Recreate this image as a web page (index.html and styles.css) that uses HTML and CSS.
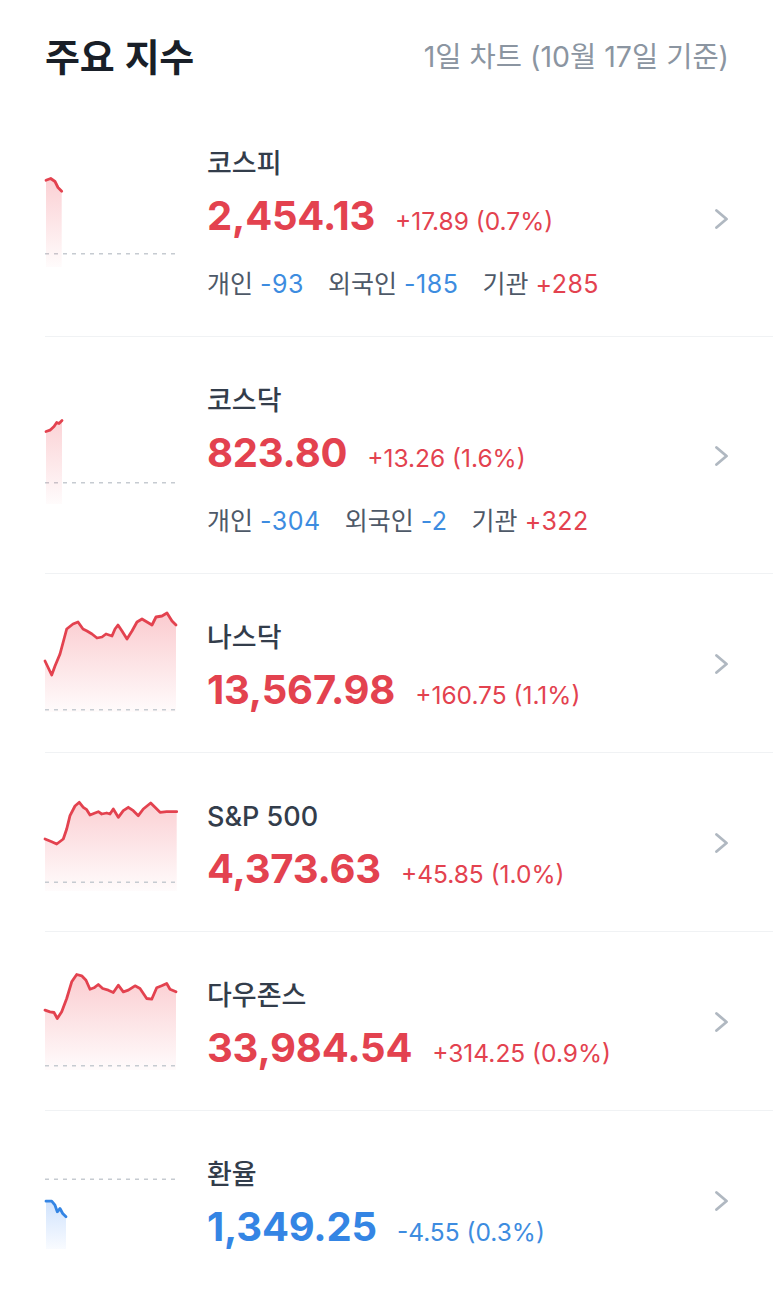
FILE: index.html
```html
<!DOCTYPE html>
<html lang="ko">
<head>
<meta charset="utf-8">
<title>주요 지수</title>
<link rel="stylesheet" href="styles.css">
</head>
<body>
<div class="page">
  <header class="header">
    <h1 class="title">주요 지수</h1>
    <div class="subtitle">1일 차트 (10월 17일 기준)</div>
  </header>

  <ul class="list">
    <li class="row">
      <svg class="chart" width="132" height="100" viewBox="0 0 132 100">
        <defs>
          <linearGradient id="gr" x1="0" y1="0" x2="0" y2="100" gradientUnits="userSpaceOnUse">
            <stop offset="0" stop-color="#f04452" stop-opacity="0.28"/>
            <stop offset="1" stop-color="#f04452" stop-opacity="0.02"/>
          </linearGradient>
          <linearGradient id="gb" x1="0" y1="0" x2="0" y2="100" gradientUnits="userSpaceOnUse">
            <stop offset="0.4" stop-color="#3182f6" stop-opacity="0.28"/>
            <stop offset="1" stop-color="#3182f6" stop-opacity="0.03"/>
          </linearGradient>
        </defs>
        <line class="base" x1="0" y1="86.8" x2="130" y2="86.8"/>
        <polygon fill="url(#gr)" points="1,13.2 5.7,11.5 10,14.5 13,20.5 16.7,24.2 16.7,100 1,100"/>
        <polyline class="line-red" points="1,13.2 5.7,11.5 10,14.5 13,20.5 16.7,24.2"/>
      </svg>
      <div class="info">
        <div class="name">코스피</div>
        <div class="quote"><span class="price up">2,454.13</span><span class="change up">+17.89 (0.7%)</span></div>
        <div class="investors">
          <span class="inv"><span class="label">개인</span> <span class="val down">-93</span></span>
          <span class="inv"><span class="label">외국인</span> <span class="val down">-185</span></span>
          <span class="inv"><span class="label">기관</span> <span class="val up">+285</span></span>
        </div>
      </div>
      <svg class="chev" width="14" height="20" viewBox="0 0 14 20"><polyline points="1.5,1.5 11.5,10 1.5,18.5"/></svg>
    </li>

    <li class="row">
      <svg class="chart" width="132" height="100" viewBox="0 0 132 100">
        <line class="base" x1="0" y1="78.8" x2="130" y2="78.8"/>
        <polygon fill="url(#gr)" points="1,27.5 5,26.2 9,22.5 11.7,18.5 14,19.5 17,16.5 17,100 1,100"/>
        <polyline class="line-red" points="1,27.5 5,26.2 9,22.5 11.7,18.5 14,19.5 17,16.5"/>
      </svg>
      <div class="info">
        <div class="name">코스닥</div>
        <div class="quote"><span class="price up">823.80</span><span class="change up">+13.26 (1.6%)</span></div>
        <div class="investors">
          <span class="inv"><span class="label">개인</span> <span class="val down">-304</span></span>
          <span class="inv"><span class="label">외국인</span> <span class="val down">-2</span></span>
          <span class="inv"><span class="label">기관</span> <span class="val up">+322</span></span>
        </div>
      </div>
      <svg class="chev" width="14" height="20" viewBox="0 0 14 20"><polyline points="1.5,1.5 11.5,10 1.5,18.5"/></svg>
    </li>

    <li class="row">
      <svg class="chart" width="132" height="100" viewBox="0 0 132 100">
        <polygon fill="url(#gr)" points="0,49 6.7,63 10,54 15,42 21.7,17 28,12 33,10 38,17 42,19 47,22 52,26 57,25 61,22 67,24 70,17 73,13 77,19 82,27 87,19 92,10 97,7 102,10 107,13 111,5 117,4 122,1 127,9 131,13 131,100 0,100"/>
        <line class="base" x1="0" y1="97.7" x2="130" y2="97.7"/>
        <polyline class="line-red" points="0,49 6.7,63 10,54 15,42 21.7,17 28,12 33,10 38,17 42,19 47,22 52,26 57,25 61,22 67,24 70,17 73,13 77,19 82,27 87,19 92,10 97,7 102,10 107,13 111,5 117,4 122,1 127,9 131,13"/>
      </svg>
      <div class="info">
        <div class="name">나스닥</div>
        <div class="quote"><span class="price up">13,567.98</span><span class="change up">+160.75 (1.1%)</span></div>
      </div>
      <svg class="chev" width="14" height="20" viewBox="0 0 14 20"><polyline points="1.5,1.5 11.5,10 1.5,18.5"/></svg>
    </li>

    <li class="row">
      <svg class="chart" width="132" height="100" viewBox="0 0 132 100">
        <polygon fill="url(#gr)" points="0,48 6.7,50.7 11.7,53 18.3,48 21.7,38 25,24.7 30,15 34.3,11.3 38.3,16.3 41.7,18.7 45,24 50,22 53.3,20.7 56.7,23 61.7,22 65,23 68.3,18 73.3,26.3 78.3,19.7 83.3,16.3 88.3,19.7 93.3,24.7 98.3,18 105.7,12 110,16.3 115,21.3 121.7,20.7 131.7,20.7 131.7,100 0,100"/>
        <line class="base" x1="0" y1="91.3" x2="130" y2="91.3"/>
        <polyline class="line-red" points="0,48 6.7,50.7 11.7,53 18.3,48 21.7,38 25,24.7 30,15 34.3,11.3 38.3,16.3 41.7,18.7 45,24 50,22 53.3,20.7 56.7,23 61.7,22 65,23 68.3,18 73.3,26.3 78.3,19.7 83.3,16.3 88.3,19.7 93.3,24.7 98.3,18 105.7,12 110,16.3 115,21.3 121.7,20.7 131.7,20.7"/>
      </svg>
      <div class="info">
        <div class="name">S&amp;P 500</div>
        <div class="quote"><span class="price up">4,373.63</span><span class="change up">+45.85 (1.0%)</span></div>
      </div>
      <svg class="chev" width="14" height="20" viewBox="0 0 14 20"><polyline points="1.5,1.5 11.5,10 1.5,18.5"/></svg>
    </li>

    <li class="row">
      <svg class="chart" width="132" height="100" viewBox="0 0 132 100">
        <polygon fill="url(#gr)" points="0,40.2 5,41.8 9,42.5 12.3,48.5 16.7,41.8 21.7,28.5 26.7,11.8 31.7,4.5 36.7,5.8 41,10.2 45,19.2 49,17.8 53.3,14.5 57.7,18.5 63.3,20.2 68.3,22.5 73.3,15.2 78.3,21.8 83.3,20.2 90,15.8 95,18.5 101.7,28.5 106.7,29.2 111.7,17.8 116.7,15.8 121.7,13.5 125,19.2 131,21.8 131,100 0,100"/>
        <line class="base" x1="0" y1="95.8" x2="130" y2="95.8"/>
        <polyline class="line-red" points="0,40.2 5,41.8 9,42.5 12.3,48.5 16.7,41.8 21.7,28.5 26.7,11.8 31.7,4.5 36.7,5.8 41,10.2 45,19.2 49,17.8 53.3,14.5 57.7,18.5 63.3,20.2 68.3,22.5 73.3,15.2 78.3,21.8 83.3,20.2 90,15.8 95,18.5 101.7,28.5 106.7,29.2 111.7,17.8 116.7,15.8 121.7,13.5 125,19.2 131,21.8"/>
      </svg>
      <div class="info">
        <div class="name">다우존스</div>
        <div class="quote"><span class="price up">33,984.54</span><span class="change up">+314.25 (0.9%)</span></div>
      </div>
      <svg class="chev" width="14" height="20" viewBox="0 0 14 20"><polyline points="1.5,1.5 11.5,10 1.5,18.5"/></svg>
    </li>

    <li class="row">
      <svg class="chart" width="132" height="100" viewBox="0 0 132 100">
        <line class="base" x1="0" y1="30.2" x2="130" y2="30.2"/>
        <polygon fill="url(#gb)" points="1,52.2 6.7,52.2 10,56.2 12.3,62.8 15,59.5 17.7,64.5 21,67.8 21,100 1,100"/>
        <polyline class="line-blue" points="1,52.2 6.7,52.2 10,56.2 12.3,62.8 15,59.5 17.7,64.5 21,67.8"/>
      </svg>
      <div class="info">
        <div class="name">환율</div>
        <div class="quote"><span class="price down-price">1,349.25</span><span class="change down">-4.55 (0.3%)</span></div>
      </div>
      <svg class="chev" width="14" height="20" viewBox="0 0 14 20"><polyline points="1.5,1.5 11.5,10 1.5,18.5"/></svg>
    </li>
  </ul>
</div>
</body>
</html>
```

FILE: styles.css
```css
html, body {
  margin: 0;
  padding: 0;
  background: #ffffff;
}

body {
  font-family: "Inter", "Noto Sans CJK KR", sans-serif;
  color: #191f28;
}

.page {
  width: 773px;
}

.header {
  height: 100px;
  box-sizing: border-box;
  padding: 8px 44px 0 45px;
  display: flex;
  align-items: center;
  justify-content: space-between;
}

.title {
  margin: 0;
  font-family: "Noto Sans CJK KR", sans-serif;
  font-size: 38px;
  font-weight: 700;
  color: #191f28;
  letter-spacing: -0.3px;
}

.subtitle {
  font-size: 28.5px;
  color: #8b95a1;
  font-weight: 400;
}

.list {
  list-style: none;
  margin: 0 0 0 45px;
  padding: 0;
}

.row {
  display: flex;
  align-items: center;
  padding: 36px 44px 34px 0;
  border-bottom: 1px solid #f0f2f4;
}

.row:last-child {
  border-bottom: none;
}

.chart {
  flex: none;
  overflow: visible;
  margin-bottom: 4px;
}

.base {
  stroke: #c6cbd1;
  stroke-width: 1.4;
  stroke-dasharray: 4 5;
}

.line-red, .line-blue {
  fill: none;
  stroke-width: 2.8;
  stroke-linejoin: round;
  stroke-linecap: round;
}

.line-red { stroke: #e3424f; }
.line-blue { stroke: #3485e4; }

.info {
  flex: 1;
  margin-left: 30px;
  padding-top: 10px;
}

.name {
  font-size: 27px;
  height: 36px;
  line-height: 36px;
  font-weight: 500;
  color: #333d4b;
  white-space: nowrap;
}

.quote {
  margin-top: 14px;
  height: 48px;
  line-height: 48px;
  white-space: nowrap;
}

.price {
  font-size: 40px;
  line-height: 1;
  font-weight: 700;
  letter-spacing: -0.2px;
}

.change {
  font-size: 24.5px;
  line-height: 1;
  margin-left: 20px;
}

.up { color: #e3424f; }
.down { color: #3d8ce0; }
.down-price { color: #3485e4; }

.investors {
  margin-top: 22px;
  height: 36px;
  line-height: 36px;
  font-size: 25px;
  display: flex;
  gap: 24px;
}

.label {
  color: #4e5968;
}

.val {
  letter-spacing: 0.5px;
}

.chev {
  flex: none;
}

.chev polyline {
  fill: none;
  stroke: #b0b8c1;
  stroke-width: 2.8;
  stroke-linecap: round;
  stroke-linejoin: round;
}
```
